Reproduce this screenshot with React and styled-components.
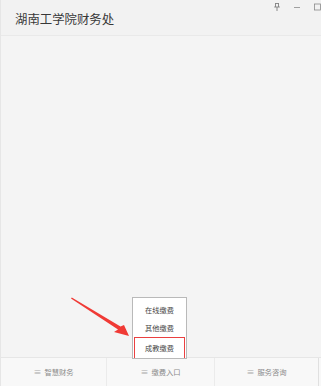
import React from "react";
import styled, { createGlobalStyle } from "styled-components";

const GlobalStyle = createGlobalStyle`
  html, body {
    margin: 0;
    padding: 0;
    background: #f4f4f4;
  }
  body {
    font-family: "Noto Sans CJK SC", "Noto Sans", sans-serif;
  }
`;

const Page = styled.div`
  position: relative;
  width: 321px;
  height: 386px;
  display: flex;
  flex-direction: column;
  background: #f4f4f4;
  border-left: 1px solid #e6e6e6;
  box-sizing: border-box;
  overflow: hidden;
`;

const Header = styled.div`
  height: 36px;
  flex-shrink: 0;
  display: flex;
  align-items: flex-start;
  justify-content: space-between;
  background: #f2f2f2;
  border-bottom: 1px solid #e9e9e9;
  box-sizing: border-box;
`;

const Title = styled.h1`
  margin: 11px 0 0 14px;
  font-size: 12.4px;
  font-weight: 400;
  line-height: 16px;
  color: #383838;
`;

const Controls = styled.div`
  flex-shrink: 0;
  display: flex;
  align-items: center;
  margin: 1px -6px 0 0;
  height: 12px;
`;

const Ctl = styled.span`
  flex: 0 0 20px;
  display: flex;
  align-items: center;
  justify-content: center;
  width: 20px;
  height: 12px;
`;

const Main = styled.div`
  flex: 1;
`;

const Footer = styled.div`
  height: 29px;
  flex-shrink: 0;
  display: grid;
  grid-template-columns: 106px 108px 1fr;
  border-top: 1px solid #e6e6e6;
  background: #f8f8f8;
  box-sizing: border-box;
`;

const Tab = styled.div`
  position: relative;
  display: flex;
  align-items: center;
  justify-content: center;
  gap: 3px;
  font-size: 7.3px;
  color: #8a8a8a;
  border-right: 1px solid ${(p) => (p.last ? "#e0e0e0" : "#ebebeb")};
  margin-right: ${(p) => (p.last ? "2px" : "0")};
`;

const Bars = styled.span`
  font-size: 8px;
  color: #aaa;
  line-height: 1;
`;

const Menu = styled.div`
  position: absolute;
  left: 25px;
  bottom: calc(100% - 1px);
  width: 55px;
  height: 62px;
  background: #fff;
  border: 1px solid #b9b9b9;
  box-sizing: border-box;
  padding: 3px 1px 0;
  display: flex;
  flex-direction: column;
`;

const MenuItem = styled.div`
  height: 20px;
  display: flex;
  align-items: center;
  justify-content: center;
  font-size: 7.2px;
  color: #444;
  box-sizing: border-box;
  border: ${(p) => (p.active ? "1.5px solid #ea4040" : "1px solid transparent")};
  ${(p) => p.active && "height: 23px; margin-top: auto; border-bottom: none;"}
`;

const Arrow = styled.svg`
  position: absolute;
  left: 68px;
  top: 296px;
  width: 64px;
  height: 42px;
`;

function Pin() {
  return (
    <svg width="8" height="10" viewBox="0 0 8 10">
      <path d="M2 1.5h4M2.5 1.5v3.5M5.5 1.5v3.5M1.2 5h5.6M4 5v4" stroke="#808080" strokeWidth="0.9" fill="none" />
    </svg>
  );
}

export default function App() {
  return (
    <>
      <GlobalStyle />
      <Page>
        <Header>
          <Title>湖南工学院财务处</Title>
          <Controls>
            <Ctl><Pin /></Ctl>
            <Ctl>
              <svg width="8" height="10" viewBox="0 0 8 10">
                <path d="M1 5.5h6" stroke="#8a8a8a" strokeWidth="0.8" />
              </svg>
            </Ctl>
            <Ctl>
              <svg width="8" height="10" viewBox="0 0 8 10">
                <rect x="1.5" y="2" width="6" height="6" stroke="#8a8a8a" strokeWidth="0.8" fill="none" />
              </svg>
            </Ctl>
          </Controls>
        </Header>
        <Main />
        <Footer>
          <Tab><Bars>≡</Bars>智慧财务</Tab>
          <Tab>
            <Menu>
              <MenuItem>在线缴费</MenuItem>
              <MenuItem>其他缴费</MenuItem>
              <MenuItem active>成教缴费</MenuItem>
            </Menu>
            <Bars>≡</Bars>缴费入口
          </Tab>
          <Tab last><Bars>≡</Bars>服务咨询</Tab>
        </Footer>
        <Arrow viewBox="0 0 64 42">
          <polygon points="2,2.6 2.8,1.6 51.5,30.5 55,29 60,40 45,36 49,33.5" fill="#f03a35" />
        </Arrow>
      </Page>
    </>
  );
}
